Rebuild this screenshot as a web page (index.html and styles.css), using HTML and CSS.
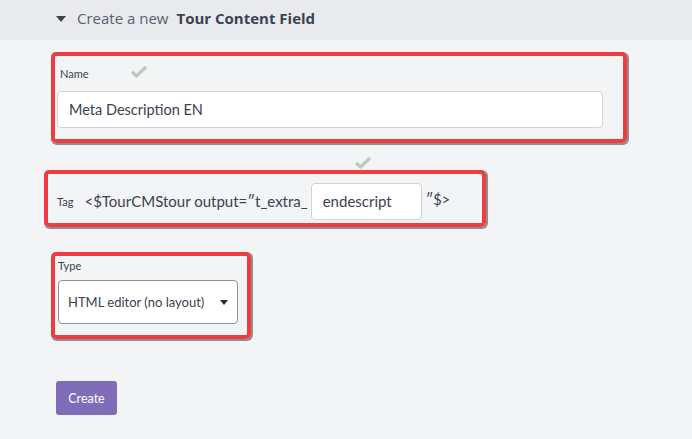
FILE: index.html
```html
<!DOCTYPE html>
<html>
<head>
<meta charset="utf-8">
<link rel="stylesheet" href="styles.css">
</head>
<body>
<div class="header">
  <span class="caret-down"></span>
  <span class="title-light">Create a new</span>
  <span class="title-bold">Tour Content Field</span>
</div>
<div class="content">
  <div class="box box-name">
    <div class="label-row">
      <span class="label">Name</span>
      <svg class="check check-name" width="18" height="13" viewBox="0 0 18 13"><path d="M2 7 L6.5 11 L16 2" fill="none" stroke="#b9cdb8" stroke-width="3.2"/></svg>
    </div>
    <div class="input input-name">Meta Description EN</div>
  </div>
  <div class="check-row">
    <svg class="check" width="18" height="13" viewBox="0 0 18 13"><path d="M2 7 L6.5 11 L16 2" fill="none" stroke="#b9cdb8" stroke-width="3.2"/></svg>
  </div>
  <div class="box box-tag">
    <span class="label">Tag</span>
    <span class="tag-text">&lt;$TourCMStour output=″t_extra_</span>
    <div class="input input-tag">endescript</div>
    <span class="tag-end">″$&gt;</span>
  </div>
  <div class="box box-type">
    <div class="label">Type</div>
    <div class="select">
      <span>HTML editor (no layout)</span>
      <span class="select-caret"></span>
    </div>
  </div>
  <button class="btn">Create</button>
</div>
</body>
</html>
```
FILE: styles.css
```css
html, body {
  margin: 0;
  padding: 0;
  background: #f3f4f6;
  font-family: Lato, "Open Sans", sans-serif;
  color: #3b4151;
}
.header {
  height: 40px;
  background: #e9eaed;
  display: flex;
  align-items: center;
  padding-left: 56px;
  padding-bottom: 4px;
  box-sizing: border-box;
}
.caret-down {
  width: 0;
  height: 0;
  border-left: 5px solid transparent;
  border-right: 5px solid transparent;
  border-top: 6px solid #3b4151;
  margin-right: 11px;
  margin-top: 2px;
}
.title-light {
  font-family: "Open Sans", sans-serif;
  font-size: 15px;
  color: #5a6070;
  margin-right: 8px;
}
.title-bold {
  font-family: "Open Sans", sans-serif;
  font-weight: 700;
  font-size: 15px;
  color: #3b4151;
}
.content {
  padding-top: 12px;
}
.box {
  border: 4px solid #ef3d3f;
  border-radius: 5px;
  box-shadow: 1px 1px 0 1px #8d8f93;
  box-sizing: border-box;
}
.box-name {
  margin-left: 51px;
  width: 576px;
  height: 91px;
  padding: 8px 20px 0 2px;
}
.label-row {
  display: flex;
  align-items: center;
  height: 18px;
  padding-left: 3px;
}
.label {
  font-size: 11px;
  color: #3b4151;
}
.check-name {
  margin-left: 41px;
  margin-top: -3px;
}
.input {
  background: #fff;
  border: 1px solid #cfd3d9;
  border-radius: 4px;
  box-sizing: border-box;
  display: flex;
  align-items: center;
}
.input-name {
  margin-top: 9px;
  height: 37px;
  padding-left: 11px;
  font-size: 14.5px;
  color: #3b4151;
}
.check-row {
  height: 13px;
  padding-left: 354px;
  margin-top: 13px;
}
.check-row .check {
  display: block;
}
.box-tag {
  margin-top: 1px;
  margin-left: 44px;
  width: 442px;
  height: 57px;
  display: flex;
  align-items: center;
  padding: 5px 0 0 9px;
}
.box-tag .label {
  margin-right: 11px;
}
.tag-text {
  font-size: 15px;
}
.input-tag {
  width: 111px;
  height: 37px;
  margin-left: 3px;
  padding-left: 11px;
  font-size: 15px;
}
.tag-end {
  font-size: 14.5px;
  margin-left: 4px;
  margin-top: -4px;
}
.box-type {
  margin-top: 25px;
  margin-left: 51px;
  width: 200px;
  height: 87px;
  padding: 3px 0 0 3px;
}
.select {
  margin-top: 8px;
  width: 180px;
  height: 44px;
  background: #fff;
  border: 1px solid #8e9197;
  border-radius: 4px;
  box-sizing: border-box;
  display: flex;
  align-items: center;
  justify-content: space-between;
  padding: 0 9px 0 9px;
  font-size: 13px;
}
.select-caret {
  width: 0;
  height: 0;
  border-left: 4.5px solid transparent;
  border-right: 4.5px solid transparent;
  border-top: 5px solid #2b2f38;
}
.btn {
  display: block;
  margin-top: 42px;
  margin-left: 56px;
  width: 61px;
  height: 34px;
  background: #7f6dba;
  border: none;
  border-radius: 3px;
  color: #fff;
  font-family: Lato, "Open Sans", sans-serif;
  font-size: 12.5px;
  padding: 0;
}
```
